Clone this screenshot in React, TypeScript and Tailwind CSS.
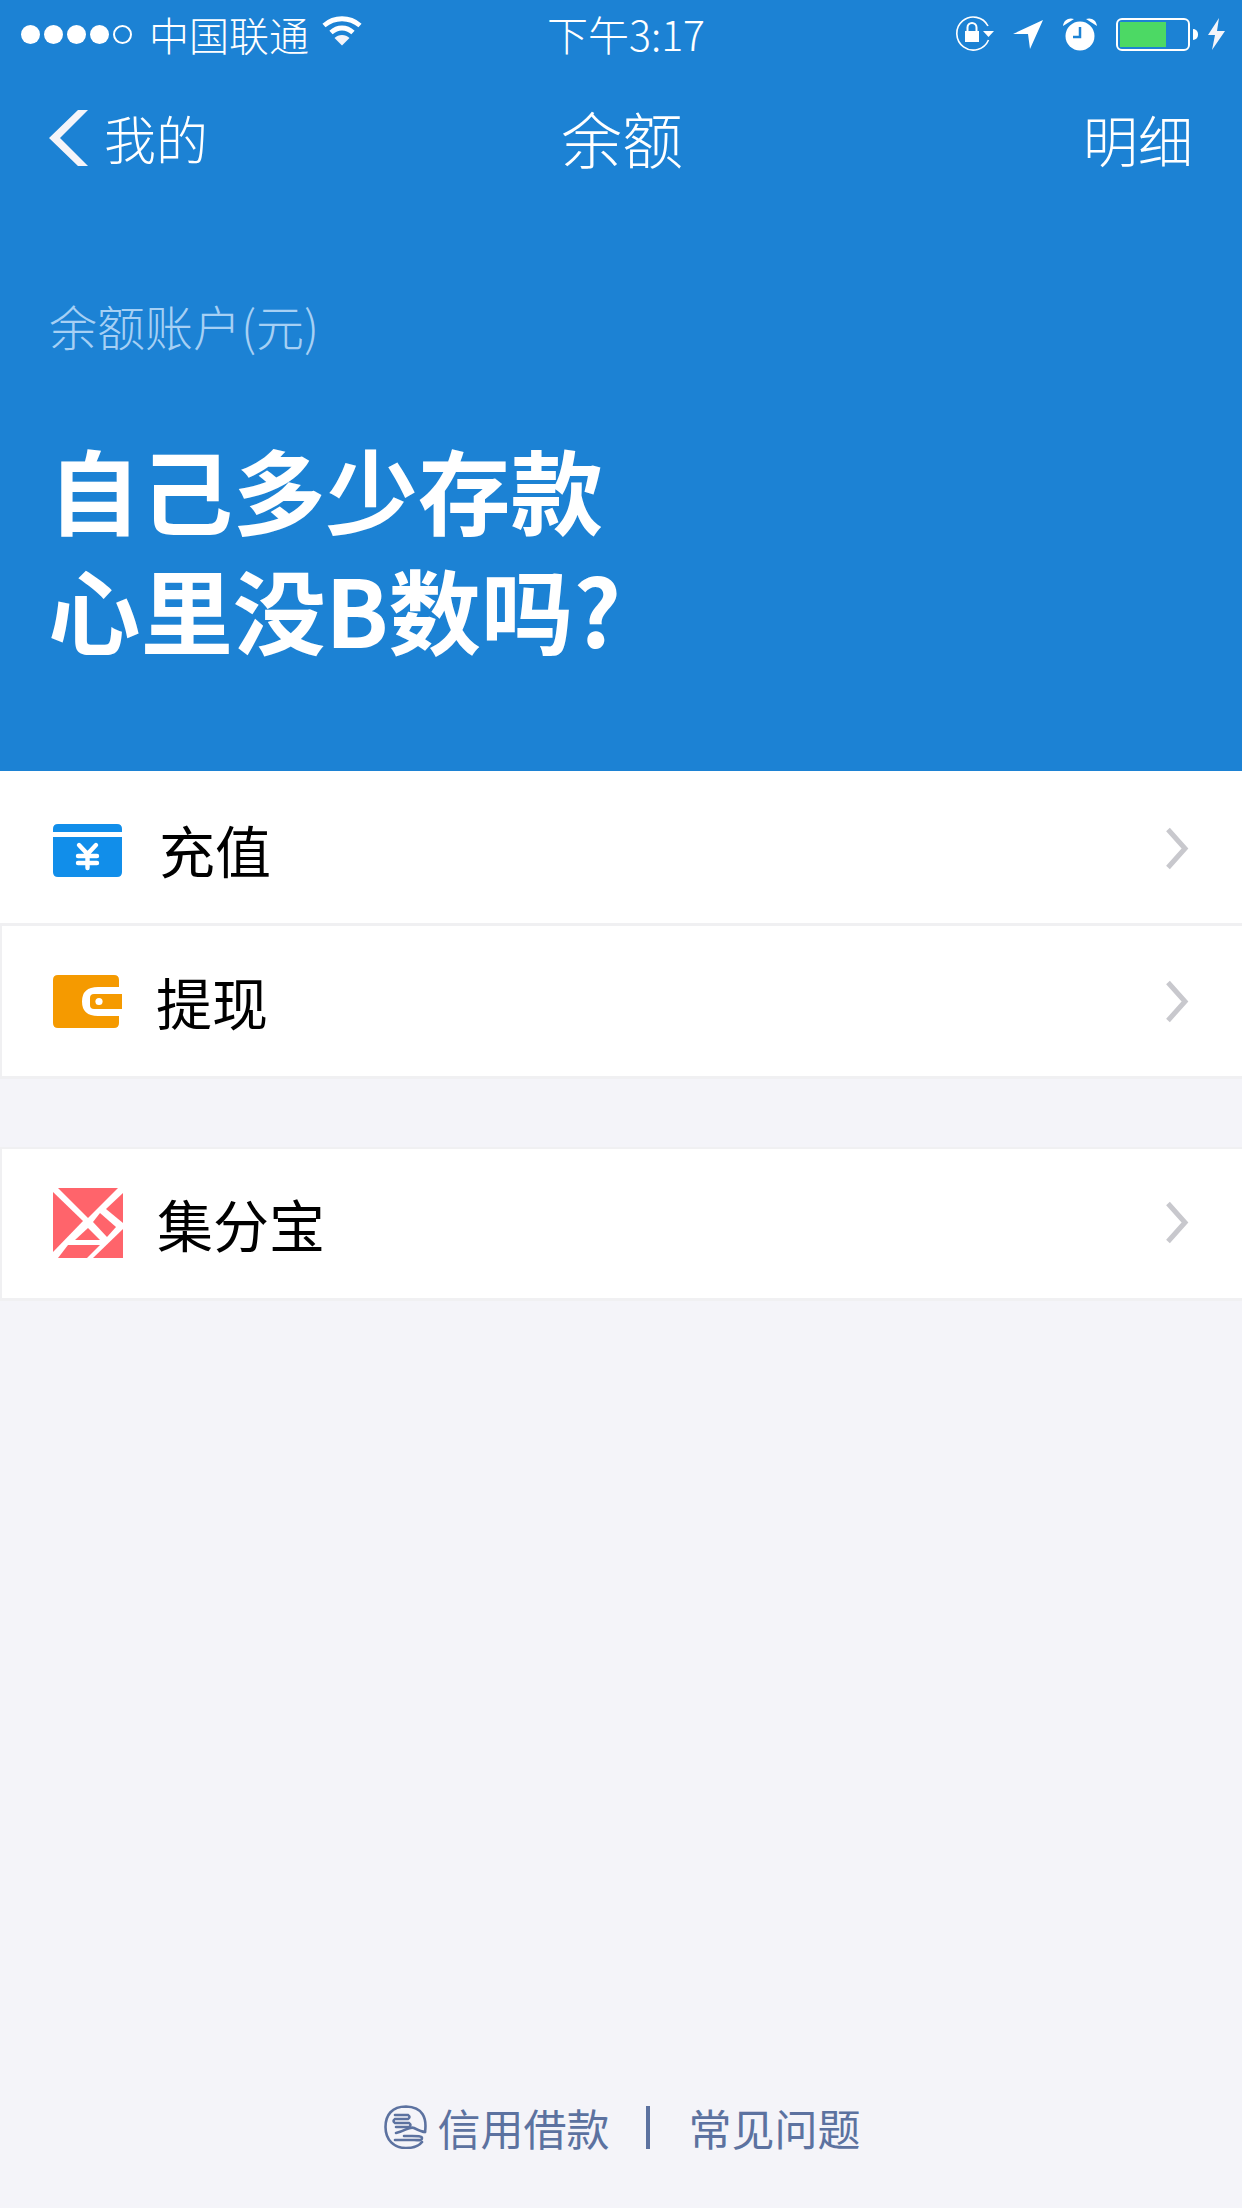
import React from 'react';

function SignalDots() {
  return (
    <div className="flex items-center gap-[4px]">
      {[1, 2, 3, 4].map(i => (
        <div key={i} className="w-[19px] h-[19px] rounded-full bg-white"></div>
      ))}
      <div className="w-[19px] h-[19px] rounded-full border-2 border-white"></div>
    </div>
  );
}

function WifiIcon() {
  return (
    <svg width="40" height="30" viewBox="0 0 40 30" fill="none" className="ml-[13px] mb-[6px]">
      <path d="M2 9.5C12.5 0.5 27.5 0.5 38 9.5" stroke="white" strokeWidth="4.8" />
      <path d="M9 16.5C15.5 10.5 24.5 10.5 31 16.5" stroke="white" strokeWidth="4.8" />
      <path d="M12.5 22C16.5 18 23.5 18 27.5 22L20 29.5Z" fill="#f4f4f9" />
    </svg>
  );
}

function StatusIcons() {
  return (
    <div className="flex items-center justify-end pr-[17px]">
      <svg width="40" height="36" viewBox="0 0 40 36" fill="none">
        <path d="M33 10A16.5 16.5 0 1 0 33.5 24" stroke="white" strokeWidth="1.6" />
        <path d="M28 15H39L33.5 21Z" fill="white" />
        <rect x="10" y="15" width="14" height="11" fill="white" />
        <path d="M12.5 15V11.5A4.5 4.5 0 0 1 21.5 11.5V15" stroke="white" strokeWidth="2" />
      </svg>
      <svg width="30" height="30" viewBox="0 0 30 30" className="ml-[18px]">
        <path d="M0 15L30 1L17 30L15 15Z" fill="white" />
      </svg>
      <svg width="36" height="34" viewBox="0 0 36 34" className="ml-[19px]">
        <circle cx="18" cy="19" r="14.5" fill="white" />
        <path d="M1 9C1.5 3 7 0 12 2Z M35 9C34.5 3 29 0 24 2Z" fill="white" />
        <path d="M18 10V20H11" stroke="#1c82d4" strokeWidth="2.5" fill="none" />
      </svg>
      <div className="ml-[18px] w-[74px] h-[33px] rounded-[6px] border-2 border-white p-[2px]">
        <div className="w-[46px] h-full bg-[#4cd964]"></div>
      </div>
      <div className="ml-[3px] w-[5px] h-[11px] rounded-r-full bg-white"></div>
      <svg width="18" height="32" viewBox="0 0 18 32" className="ml-[9px]">
        <path d="M12 0L1 17H8L5 32L18 13H10Z" fill="#f4f4f9" />
      </svg>
    </div>
  );
}

function RechargeIcon() {
  return (
    <svg width="69" height="53" viewBox="0 0 69 53" className="mt-[3px]">
      <path d="M0 8V5Q0 0 5 0H64Q69 0 69 5V8Z" fill="#118eea" />
      <path d="M0 13H69V48Q69 53 64 53H5Q0 53 0 48Z" fill="#118eea" />
      <path d="M26 21L34.5 30L43 21M25 32H44M25 39H44M34.5 30V44" stroke="white" strokeWidth="4.4" strokeLinecap="round" fill="none" />
    </svg>
  );
}

function WalletIcon() {
  return (
    <svg width="69" height="53" viewBox="0 0 69 53">
      <path d="M5 0H61Q66 0 66 5V12H45Q29 12 29 26.5Q29 41 45 41H66V48Q66 53 61 53H5Q0 53 0 48V5Q0 0 5 0Z" fill="#f59a00" />
      <path d="M41 19H69V34H41Q37 34 37 30V23Q37 19 41 19Z" fill="#f59a00" />
      <circle cx="46" cy="26.5" r="3.6" fill="white" />
    </svg>
  );
}

function JifenIcon() {
  return (
    <svg width="70" height="70" viewBox="0 0 70 70" fill="#ff646b" className="shrink-0">
      <polygon points="5,0 65,0 35,30" />
      <polygon points="0,4 30,33 0,64" />
      <polygon points="70,5 53,21 70,35" />
      <polygon points="47,25 63,39 54,49 40,34" />
      <polygon points="35,40 47,52 22,52" />
      <polygon points="15,57 47,57 34,70 5,70" />
      <polygon points="70,41 70,70 40,70" />
    </svg>
  );
}

function LoanIcon() {
  return (
    <svg width="44" height="44" viewBox="0 0 44 44" fill="none" stroke="#5c72a0" strokeWidth="2.6" strokeLinecap="round" className="mr-[10px]">
      <path d="M41 27C43 13 39 2 22 1.5C8 1.5 1.5 10 1.5 22C1.5 35 10 43 22 43C29 43 35 41 38 37" />
      <path d="M11 10H24Q27 12 24 14H11Q8 16 11 18H25Q28 20 25 22H12" />
      <path d="M12 28C22 26 25 21 30 23C34 25 38 27 41 27" />
      <path d="M11 35H30C35 35 38 36 38 33C38 31 33 31 28 31H20" />
    </svg>
  );
}

function Chevron() {
  return (
    <svg width="24" height="43" viewBox="0 0 24 43" fill="none" className="ml-auto mr-[53px]">
      <path d="M3 2.5L20 21.5L3 40.5" stroke="#c8c8cd" strokeWidth="5" />
    </svg>
  );
}

interface RowProps {
  icon: React.ReactNode;
  label: string;
  labelGap: string;
  className: string;
}

function Row({ icon, label, labelGap, className }: RowProps) {
  return (
    <div className={`flex items-center bg-white text-[56px] text-black ${className}`}>
      <div className={`w-[69px] flex justify-start ${labelGap}`}>{icon}</div>
      <span>{label}</span>
      <Chevron />
    </div>
  );
}

export default function App() {
  return (
    <div className="w-[1242px] h-[2208px] flex flex-col bg-[#f4f4f9] overflow-hidden font-['Noto_Sans_CJK_SC',sans-serif]">
      <div className="h-[771px] bg-[#1c82d4] text-white font-light">
        <div className="h-[68px] grid grid-cols-3 items-center">
          <div className="flex items-center pl-[21px] whitespace-nowrap">
            <SignalDots />
            <span className="ml-[17px] text-[40px]">中国联通</span>
            <WifiIcon />
          </div>
          <div className="text-center text-[41px] pl-[10px]">下午3:17</div>
          <StatusIcons />
        </div>

        <div className="h-[140px] grid grid-cols-3 items-center pl-[49px] pr-[49px]">
          <div className="flex items-center">
            <svg width="40" height="58" viewBox="0 0 40 58">
              <polygon points="29,1 39,1 11,29 39,57 29,57 0,29" fill="#f4f4f9" />
            </svg>
            <span className="ml-[15px] text-[52px]">我的</span>
          </div>
          <div className="text-center text-[61px] pl-[2px]">余额</div>
          <div className="text-right text-[55px]">明细</div>
        </div>

        <div className="pl-[49px] pt-[82px] text-[48px] leading-[70px] text-[#a6d0f4]">余额账户(元)</div>

        <div className="pl-[48px] pt-[68px] text-[92.5px] leading-[120px] font-bold">
          <div>自己多少存款</div>
          <div>心里没B数吗?</div>
        </div>
      </div>

      <Row icon={<RechargeIcon />} label="充值" labelGap="mr-[37px]" className="h-[155px] pl-[53px] pt-[3px] border-b-[3px] border-[#f0f0f2]" />
      <Row icon={<WalletIcon />} label="提现" labelGap="mr-[34px]" className="h-[153px] pl-[51px] border-b-[3px] border-l-2 border-[#f0f0f2]" />
      <Row icon={<JifenIcon />} label="集分宝" labelGap="mr-[35px]" className="h-[154px] pl-[51px] pb-[2px] mt-[68px] border-t-2 border-b-[3px] border-l-2 border-[#f0f0f2]" />

      <div className="mt-auto mb-[51px] flex items-center justify-center text-[43px] leading-[60px] text-[#5c72a0] pl-[2px]">
        <LoanIcon />
        <span>信用借款</span>
        <div className="ml-[36px] mr-[39px] w-[4px] h-[43px] bg-[#5c72a0]"></div>
        <span>常见问题</span>
      </div>
    </div>
  );
}
